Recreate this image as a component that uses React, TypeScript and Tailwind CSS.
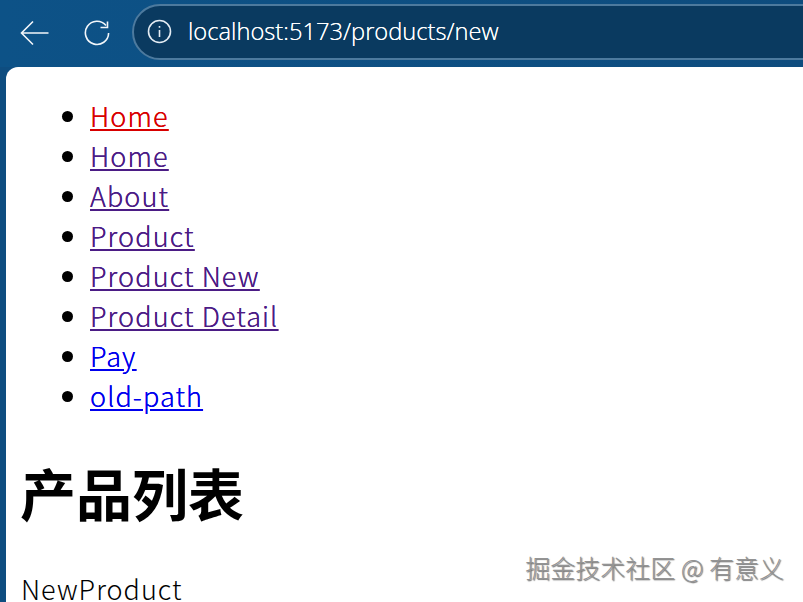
import React from "react";

const links = [
  { label: "Home", color: "text-[#d80000]" },
  { label: "Home", color: "text-[#4b1c85]" },
  { label: "About", color: "text-[#4b1c85]" },
  { label: "Product", color: "text-[#4b1c85]" },
  { label: "Product New", color: "text-[#4b1c85]" },
  { label: "Product Detail", color: "text-[#4b1c85]" },
  { label: "Pay", color: "text-[#0000ee]" },
  { label: "old-path", color: "text-[#0000ee]" },
];

const App: React.FC = () => {
  return (
    <div className="relative w-[803px] h-[602px] overflow-hidden bg-[#0e4d80] font-['Noto_Sans_CJK_SC',sans-serif]">
      {/* browser toolbar */}
      <div className="h-[67px] flex items-center bg-gradient-to-r from-[#0d5287] to-[#0e4c7e]">
        <svg className="ml-[20px] mt-[-2px]" width="30" height="26" viewBox="0 0 30 26" fill="none" stroke="#f2f6fa" strokeWidth="1.6">
          <path d="M28.5 13H1.5M13 1.5L1.5 13L13 24.5" />
        </svg>
        <svg className="ml-[34px] mt-[-2px]" width="26" height="26" viewBox="0 0 26 26" fill="none" stroke="#f2f6fa" strokeWidth="1.6">
          <path d="M22 5.5A11.6 11.6 0 1 0 24.6 13" />
          <path d="M23.5 1.5V7.5H16.5" />
        </svg>
        <div className="ml-[22px] mt-[-4px] flex-1 h-[56px] -mr-[40px] rounded-l-full border-2 border-[#4d7a9e] bg-[#0a3a60] flex items-center">
          <svg className="ml-[13px]" width="25" height="25" viewBox="0 0 25 25" fill="none" stroke="#e4ecf3" strokeWidth="1.6">
            <circle cx="12.5" cy="12.5" r="11" />
            <path d="M12.5 11V18M12.5 7V8.8" />
          </svg>
          <span className="ml-[16px] text-[23.7px] leading-none font-light text-white font-['Open_Sans',sans-serif] [text-shadow:0_0_0.4px_#fff]">
            localhost:5173/products/new
          </span>
        </div>
      </div>

      {/* page */}
      <div className="ml-[6px] h-[535px] bg-white rounded-tl-[12px] overflow-hidden pl-[15px] text-black">
        <ul className="pl-[41px] pt-[29px] text-[27px] leading-[40px] font-light tracking-[1.1px]">
          {links.map((l, i) => (
            <li key={i} className="flex items-center">
              <span className="w-[11px] h-[11px] rounded-full bg-black mr-[17px]" />
              <a href="#" className={`underline [text-shadow:0_0_0.2px_currentColor] ${l.color}`}>
                {l.label}
              </a>
            </li>
          ))}
        </ul>
        <h1 className="mt-[36px] -ml-[1px] text-[56px] leading-[80px] font-bold">产品列表</h1>
        <p className="mt-[37px] text-[27px] leading-[40px] font-light tracking-[1px]">NewProduct</p>
      </div>

      {/* watermark */}
      <div className="absolute right-[19px] top-[550px] text-[25px] leading-[34px] font-light text-[#949494] [text-shadow:1px_1px_1px_#777]">
        掘金技术社区 @ 有意义
      </div>
    </div>
  );
};

export default App;
